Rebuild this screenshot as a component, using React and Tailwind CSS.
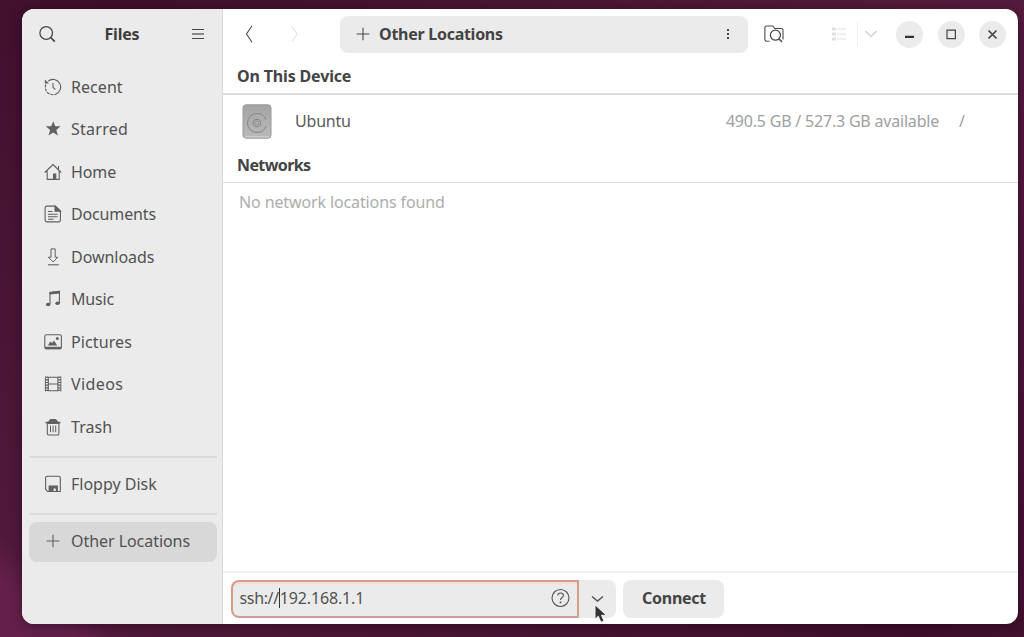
import React from "react";

const Icon = ({ children, className = "size-[18px]", viewBox = "0 0 18 18" }) => (
  <svg
    className={className}
    viewBox={viewBox}
    fill="none"
    stroke="currentColor"
    strokeWidth="1.1"
    aria-hidden="true"
  >
    {children}
  </svg>
);

const RecentIcon = () => (
  <Icon>
    <path d="M4 3.200A7.700 7.700 0 1 1 1.400 10.500" strokeDasharray="28 1 3 1 3 1" />
    <path d="M1.300 9.500A8 8 0 0 1 1.900 6.500" />
    <path d="M.8 1.500v4h4.200z" fill="currentColor" stroke="none" />
    <path d="M9 5v4.300l2.400 2.200" />
  </Icon>
);
const StarIcon = () => (
  <Icon>
    <path
      d="M9.200 1.300l2 5h5.400l-4.300 3.600 1.600 5.700-4.700-3.200-4.700 3.200 1.600-5.700L1.800 6.300h5.400z"
      fill="currentColor"
      stroke="none"
    />
  </Icon>
);
const HomeIcon = () => (
  <Icon>
    <path d="M.8 9.500L9 1.600l8.200 7.900M14.500 6.500V3M3.200 8v8.400h12V8" />
    <path d="M9 16.400v-5.800h3.300v5.800z" fill="currentColor" stroke="none" />
  </Icon>
);
const DocumentIcon = () => (
  <Icon>
    <path d="M2.800 1.100h8.600l5 4.800v9.300a1.700 1.700 0 0 1-1.700 1.700H2.800a1.700 1.700 0 0 1-1.700-1.700V2.800a1.700 1.700 0 0 1 1.700-1.700z" />
    <path d="M11 1.100v5h5.400z" fill="currentColor" />
    <path d="M4 6.500h4.500M4 9.300h9.600M4 11.800h9.600M4 14.300h5.500" />
  </Icon>
);
const DownloadIcon = () => (
  <Icon>
    <path d="M7 .9h4.200v8.300h2.600L9.100 14 4.400 9.200H7z" strokeWidth="1" />
    <path d="M4 16.800h10.800" />
  </Icon>
);
const MusicIcon = () => (
  <Icon>
    <path d="M6 14V2.500L15.400 1.300v11.600" />
    <path d="M5.500 1.900l10.400-1.200v2.700L5.500 4.600z" fill="currentColor" stroke="none" />
    <ellipse cx="4.200" cy="14.500" rx="2.300" ry="1.700" fill="currentColor" stroke="none" />
    <ellipse cx="13.600" cy="13.300" rx="2.300" ry="1.700" fill="currentColor" stroke="none" />
  </Icon>
);
const PictureIcon = () => (
  <Icon>
    <rect x=".8" y="1.800" width="16.600" height="14" rx="1.600" />
    <path d="M1 15h16.200" strokeWidth="2.400" />
    <path d="M4 12.400l2.200-4 2 1.500 1.800-2.400 3.200 4.900z" fill="currentColor" stroke="none" />
    <circle cx="13.300" cy="5.600" r="1.500" fill="currentColor" stroke="none" />
  </Icon>
);
const VideoIcon = () => (
  <Icon>
    <path d="M4.300 2.200h9.600v13.600H4.300zM4.300 9h9.600" />
    <path d="M1.400 1.600v14.800M16.800 1.600v14.800" strokeWidth="1" />
    <path d="M2.900 1.600v14.800M15.300 1.600v14.800" strokeWidth="2.400" strokeDasharray="1.200 1.450" />
  </Icon>
);
const TrashIcon = () => (
  <Icon>
    <path d="M3.300 5.400h11.600v10.200a1.400 1.400 0 0 1-1.400 1.400H4.700a1.400 1.400 0 0 1-1.400-1.400z" />
    <path d="M1.600 4.600h14.800" strokeWidth="1.700" />
    <path d="M4 4.200C4.800 2.400 6 1 7 1h4c1.200 0 2.500 1.400 3.200 3.200z" fill="currentColor" stroke="none" />
    <path d="M6.500 7.600v6.600M9.100 7.600v6.600M11.700 7.600v6.600" strokeWidth="1" />
  </Icon>
);
const FloppyIcon = () => (
  <Icon>
    <path d="M3.100 1.300h11.700a1.500 1.500 0 0 1 1.500 1.500v13.700H3.500L1.600 14.200V2.800a1.500 1.500 0 0 1 1.500-1.500z" />
    <path d="M4.600 16.600v-6h9.300v6h-2.100v-3.200H9.500v3.200z" fill="currentColor" stroke="none" />
  </Icon>
);
const PlusIcon = () => (
  <Icon>
    <path d="M9 2.700v12.600M2.700 9h12.600" />
  </Icon>
);

const places = [
  { label: "Recent", icon: RecentIcon, tracking: "tracking-[0.05px]" },
  { label: "Starred", icon: StarIcon, tracking: "tracking-[0.25px]" },
  { label: "Home", icon: HomeIcon, tracking: "tracking-[-0.1px]" },
  { label: "Documents", icon: DocumentIcon, tracking: "tracking-[-0.15px]" },
  { label: "Downloads", icon: DownloadIcon, tracking: "tracking-[-0.05px]" },
  { label: "Music", icon: MusicIcon, tracking: "tracking-[-0.2px]" },
  { label: "Pictures", icon: PictureIcon, tracking: "tracking-[0.1px]" },
  { label: "Videos", icon: VideoIcon, tracking: "tracking-[0.4px]" },
  { label: "Trash", icon: TrashIcon, tracking: "tracking-[0.05px]" },
];

function Place({ label, icon: Glyph, tracking, className = "h-[42.5px]" }) {
  return (
    <li className={`flex items-center gap-[9px] pl-[15px] text-[#606060] ${className}`}>
      <Glyph />
      <span className={`text-base leading-5 text-[#525252] ${tracking}`}>{label}</span>
    </li>
  );
}

function Sidebar() {
  return (
    <aside className="flex w-[201px] shrink-0 flex-col border-r border-[#dadada] bg-[#ebebeb] pr-[5px] pl-[7px]">
      <header className="flex h-[52px] items-center justify-between pr-[11px] pb-[1.5px] pl-[9px] text-[#4a4a4a]">
        <Icon>
          <circle cx="8.200" cy="8" r="6.300" strokeWidth="1.300" />
          <path d="M12.800 12.700l4 3.900" strokeWidth="1.800" />
        </Icon>
        <h1 className="mr-[2px] text-base leading-5 font-bold tracking-[-0.2px] text-[#3d3d3d]">
          Files
        </h1>
        <Icon className="h-[14px] w-4" viewBox="0 0 16 14">
          <path d="M2 2.500h12M2 11.500h12" strokeWidth="1.100" />
          <path d="M2 7h12" strokeWidth="2" strokeOpacity=".6" />
        </Icon>
      </header>
      <ul className="pt-[5.200px]">
        {places.map((p) => (
          <Place key={p.label} {...p} />
        ))}
      </ul>
      <hr className="mt-[8.300px] h-[2px] border-0 bg-[#dadada]" />
      <ul className="mt-[4.750px]">
        <Place label="Floppy Disk" icon={FloppyIcon} tracking="tracking-[0px]" />
      </ul>
      <hr className="mt-[7.500px] h-[2px] border-0 bg-[#dcdcdc]" />
      <ul className="mt-[6.750px]">
        <Place
          label="Other Locations"
          icon={PlusIcon}
          tracking="tracking-[-0.05px]"
          className="h-10 rounded-lg bg-[#d8d8d8] pb-px"
        />
      </ul>
    </aside>
  );
}

function WindowButton({ children }) {
  return (
    <button className="flex size-[27px] items-center justify-center rounded-full bg-[#ebebeb] text-[#444]">
      <Icon className="size-[15px]" viewBox="0 0 15 15">
        {children}
      </Icon>
    </button>
  );
}

function Toolbar() {
  return (
    <header className="flex h-[52px] shrink-0 items-center pr-3 pb-px text-[#4a4a4a]">
      <Icon className="ml-[17px] size-[18px]">
        <path d="M12 .8L6.500 9l5.500 8.200" />
      </Icon>
      <Icon className="ml-[27px] size-[18px] text-[#e4e4e4]">
        <path d="M7 1.500L12 9l-5 7.500" />
      </Icon>
      <div className="ml-[37px] flex h-[37px] w-[408px] items-center rounded-lg bg-[#ebebeb] pl-[14px]">
        <PlusIcon />
        <span className="ml-[7px] text-base leading-5 font-bold tracking-[-0.27px] text-[#444]">
          Other Locations
        </span>
        <svg className="mr-[11px] ml-auto size-[18px]" viewBox="0 0 18 18" fill="currentColor">
          <path d="M8 4h2v2H8zM8 8h2v2H8zM8 12h2v2H8z" />
        </svg>
      </div>
      <Icon className="ml-4 h-[18px] w-5" viewBox="0 0 20 18">
        <path d="M5.500 16.200H2.600A1.700 1.700 0 0 1 .9 14.500V2.700A1.700 1.700 0 0 1 2.600 1h6.200l2 2.500h6.500a1.700 1.700 0 0 1 1.700 1.700v9.300" />
        <circle cx="11.400" cy="10.200" r="5" strokeWidth="1.300" />
        <path d="M14.800 13.800l3.200 3.100" strokeWidth="1.500" />
      </Icon>
      <Icon className="ml-[46px] size-[18px] text-[#e0e0e0]">
        <path d="M7 4h9.500M7 9h9.500M7 14h9.500" />
        <path d="M4 2.500v13" strokeWidth="4" strokeDasharray="3 2" />
      </Icon>
      <div className="ml-[9px] h-6 w-px bg-[#efefef]" />
      <Icon className="ml-[6px] h-2 w-[14px] text-[#d4d4d4]" viewBox="0 0 14 8">
        <path d="M1.500 1.200L7 6.500l5.500-5.300" strokeWidth="1.600" />
      </Icon>
      <div className="ml-auto flex gap-[14.500px]">
        <WindowButton>
          <path d="M3 9.800h9" strokeWidth="2.200" stroke="#333" />
        </WindowButton>
        <WindowButton>
          <path d="M3 3.200h8.400v8.400H3z" strokeWidth="1.200" />
        </WindowButton>
        <WindowButton>
          <path d="M3.500 3.500l8 8M11.500 3.500l-8 8" strokeWidth="1.700" />
        </WindowButton>
      </div>
    </header>
  );
}

function DriveIcon() {
  return (
    <svg className="h-[35px] w-[30px]" viewBox="0 0 30 35" fill="none" aria-hidden="true">
      <defs>
        <linearGradient id="drive" x1="0" y1="0" x2="0" y2="1">
          <stop offset="0" stopColor="#a4a4a4" />
          <stop offset="1" stopColor="#bababa" />
        </linearGradient>
      </defs>
      <rect x="1" y=".8" width="28" height="33.400" rx="3" fill="url(#drive)" stroke="#999" />
      <path d="M3 32.700h24" stroke="#c9c9c9" strokeWidth="1.500" />
      <circle cx="15" cy="19" r="9.500" stroke="#858585" strokeDasharray="53 4" strokeDashoffset="-3" />
      <circle cx="15" cy="19" r="3.800" stroke="#858585" />
      <circle cx="15" cy="19" r="1.800" stroke="#959595" />
    </svg>
  );
}

function ConnectBar() {
  return (
    <footer className="flex h-[53px] shrink-0 items-center border-t-2 border-[#f0f0f0] pl-[7.500px] text-[#525252]">
      <div className="flex h-[38px] w-[348.500px] items-center rounded-l-lg border-2 border-[#d79c87] border-b-[#cf9c96] bg-[#ebebeb] pr-[7px] pb-px pl-[7px] shadow-[inset_0_2px_0_#f2dfda]">
        <span className="text-base leading-5 tracking-[-0.35px]">ssh://</span>
        <span className="h-5 w-px bg-[#333]" />
        <span className="text-base leading-5 tracking-[-0.16px]">192.168.1.1</span>
        <Icon className="ml-auto size-[20px]" viewBox="0 0 20 20">
          <circle cx="10.500" cy="10" r="8.500" />
          <path d="M7.700 7.500C7.800 5.800 9 5 10.500 5c1.700 0 2.900.9 2.900 2.500 0 2.200-2.900 2.300-2.900 4.400" />
          <path d="M10.500 13.500v1.800" strokeWidth="1.600" />
        </Icon>
      </div>
      <button className="relative flex h-[38px] w-[37px] items-center justify-center rounded-r-lg bg-[#ebebeb]">
        <Icon className="h-2 w-[14px]" viewBox="0 0 14 8">
          <path d="M1 1.500L6.500 6 12 1.500" strokeWidth="1.400" />
        </Icon>
        <svg
          className="absolute top-[24px] left-[15px] h-[20px] w-[15px]"
          viewBox="0 0 15 20"
          aria-hidden="true"
        >
          <path
            d="M1 .8v14.400l3.300-3 2.500 6 3.200-1.300-2.500-5.600h5z"
            fill="#333"
            stroke="#f5f5f5"
            strokeWidth="1"
          />
        </svg>
      </button>
      <button className="ml-[7px] h-[38px] w-[101px] rounded-lg bg-[#ebebeb] pb-[1.5px] pl-px text-base leading-5 font-bold tracking-[-0.25px] text-[#444]">
        Connect
      </button>
    </footer>
  );
}

export default function App() {
  return (
    <div className="h-[637px] w-[1024px] overflow-hidden bg-[linear-gradient(38deg,#64204a_0%,#64204a_4%,#50193a_7%,#3f0f2c_50%,#4b1635_75%,#551b3d_100%)] pt-[8.500px] pl-[22px] font-['Noto_Sans',sans-serif]">
      <div className="flex h-[615.500px] w-[996px] overflow-hidden rounded-xl bg-white shadow-[0_2px_12px_rgba(20,0,15,0.450)]">
        <Sidebar />
        <main className="flex min-w-0 flex-1 flex-col">
          <Toolbar />
          <h2 className="flex h-[34.500px] shrink-0 items-center border-b-2 border-[#dedede] pb-px pl-[14px] text-base leading-5 font-bold tracking-[-0.16px] text-[#444]">
            On This Device
          </h2>
          <div className="flex h-[53px] shrink-0 items-center pr-[53px] pb-px pl-[19px]">
            <DriveIcon />
            <span className="ml-[23px] text-base leading-5 tracking-[-0.2px] text-[#5a5a5a]">
              Ubuntu
            </span>
            <span className="ml-auto text-base leading-5 tracking-[-0.2px] text-[#a0a0a0]">
              490.5 GB / 527.3 GB available
            </span>
            <span className="ml-5 text-base leading-5 text-[#a0a0a0]">/</span>
          </div>
          <h2 className="flex h-[35px] shrink-0 items-center border-b border-[#dedede] pl-[14px] text-base leading-5 font-bold tracking-[-0.6px] text-[#444]">
            Networks
          </h2>
          <p className="flex h-[38px] items-center pl-4 text-base leading-5 tracking-[-0.120px] text-[#adadad]">
            No network locations found
          </p>
          <div className="flex-1" />
          <ConnectBar />
        </main>
      </div>
    </div>
  );
}
